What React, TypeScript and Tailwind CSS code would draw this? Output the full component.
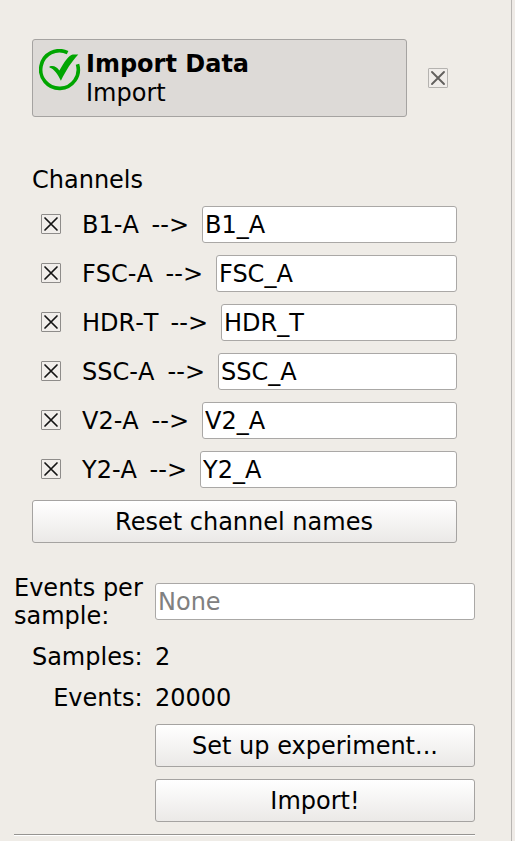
import { useState } from "react";

const channels = [
  { name: "B1-A", value: "B1_A", field: "w-[255px]" },
  { name: "FSC-A", value: "FSC_A", field: "w-[241px]" },
  { name: "HDR-T", value: "HDR_T", field: "w-[236px]" },
  { name: "SSC-A", value: "SSC_A", field: "w-[239px]" },
  { name: "V2-A", value: "V2_A", field: "w-[255px]" },
  { name: "Y2-A", value: "Y2_A", field: "w-[257px]" },
];

const button =
  "block rounded-[3px] border border-[#a5a3a1] bg-linear-to-b from-white to-[#ebe9e7] text-center";
const input =
  "block h-[37px] rounded-[3px] border border-[#aaa8a6] bg-white pl-[2px] outline-none";

function CheckBox({ muted = false }: { muted?: boolean }) {
  return (
    <svg className="block size-5 shrink-0" viewBox="0 0 20 20" fill="none">
      <rect
        x="0.5"
        y="0.5"
        width="19"
        height="19"
        rx="0.5"
        fill={muted ? "#f0edea" : "#f1eeeb"}
        stroke={muted ? "#b5b3b0" : "#8e8c8a"}
      />
      <path
        d="M4 4L16 16M16 4L4 16"
        stroke={muted ? "#62605e" : "#141414"}
        strokeWidth={muted ? 1.9 : 1.7}
        strokeLinecap="round"
      />
    </svg>
  );
}

function ChannelRow({ name, value, field }: { name: string; value: string; field: string }) {
  const [text, setText] = useState(value);
  return (
    <div className="flex h-[37px] items-center">
      <div className="h-[21px]">
        <CheckBox />
      </div>
      <div className="mr-[13px] ml-[21px] flex flex-1 justify-between [font-kerning:none]">
        <span>{name}</span>
        <span>{"-->"}</span>
      </div>
      <input className={`${input} ${field}`} value={text} onChange={(e) => setText(e.target.value)} />
    </div>
  );
}

export default function App() {
  return (
    <div className="flex h-[841px] w-[515px] overflow-hidden bg-[#efebe7] font-['DejaVu_Sans',sans-serif] text-[24px] leading-[28px] text-black">
      <main className="h-full w-[512px] border-r border-[#b9b6b3] bg-[#efece7] pt-[39px]">
        <header className="ml-8 flex items-center">
          <div className="flex h-[78px] w-[375px] rounded-[3px] border border-[#a5a3a1] bg-[#dddad7] pt-[9px] pl-[6px]">
            <svg className="size-[42px] shrink-0" viewBox="0 0 42 42" fill="none">
              <path
                d="M28.6 3.6A18.8 18.8 0 1 0 38.5 15.2"
                stroke="#00a500"
                strokeWidth="3.6"
              />
              <path
                d="M10.5 17.4C14.5 16.2 17.6 17.4 20.4 21.6C25.2 12.6 30 5.9 33.8 5.4H39.3C32.4 12.8 27.2 20.8 21.9 31.7C18.6 25.2 15.4 20.3 10.5 18.6Z"
                fill="#00a500"
              />
            </svg>
            <div className="mt-px ml-[5px]">
              <div className="font-bold leading-[29px]">Import Data</div>
              <div>Import</div>
            </div>
          </div>
          <div className="ml-[21px]">
            <CheckBox muted />
          </div>
        </header>

        <section className="mt-[49px] ml-8 w-[425px]">
          <h2>Channels</h2>
          <div className="mt-3 ml-[9px] flex flex-col gap-3">
            {channels.map((c) => (
              <ChannelRow key={c.name} {...c} />
            ))}
          </div>
          <button className={`${button} mt-3 h-[43px] w-full pr-px`}>Reset channel names</button>
        </section>

        <section className="mt-[31px] ml-[14px] w-[461px]">
          <div className="flex h-14">
            <label className="w-[141px]">
              Events per
              <br />
              sample:
            </label>
            <input className={`${input} mt-[9px] w-[320px] pt-px placeholder:text-[#808080] placeholder:opacity-100`} placeholder="None" />
          </div>
          <div className="mt-[13px] flex">
            <span className="w-[128.5px] text-right">Samples:</span>
            <span className="ml-[12.5px]">2</span>
          </div>
          <div className="mt-[13px] flex">
            <span className="w-[128.5px] text-right">Events:</span>
            <span className="ml-[12.5px]">20000</span>
          </div>
          <div className="mt-3 ml-[141px] flex flex-col gap-3">
            <button className={`${button} h-[43px]`}>Set up experiment...</button>
            <button className={`${button} h-[43px]`}>Import!</button>
          </div>
          <div className="mt-3 h-[2px] border-t border-b border-t-[#969491] border-b-white" />
        </section>
      </main>
    </div>
  );
}
